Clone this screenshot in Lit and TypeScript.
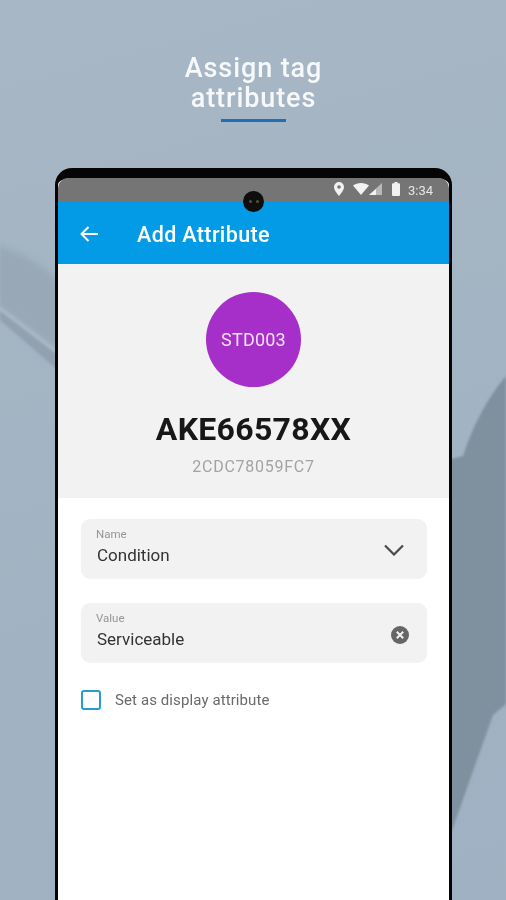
import { LitElement, html, css, svg } from "lit";
import { customElement } from "lit/decorators.js";

const FONT = css`Roboto, "Liberation Sans", sans-serif`;

@customElement("app-root")
export class AppRoot extends LitElement {
  static styles = css`
    :host {
      display: block;
      width: 506px;
      height: 900px;
      overflow: hidden;
      position: relative;
      background: linear-gradient(165deg, #a8b7c5 0%, #a3b4c3 40%, #9fb1c2 100%);
      font-family: ${FONT};
    }
    .bg {
      position: absolute;
      inset: 0;
      width: 506px;
      height: 900px;
      filter: blur(0.8px);
    }
    .page {
      position: relative;
      display: flex;
      flex-direction: column;
      align-items: center;
      padding: 53px 0 0 1px;
      filter: blur(0.35px);
    }
    h1 {
      margin: 0;
      font-size: 27px;
      line-height: 30px;
      font-weight: 500;
      letter-spacing: 0.9px;
      color: #f6f8fa;
      text-align: center;
    }
    .rule {
      width: 65px;
      height: 3px;
      margin-top: 6px;
      background: #1d6fb8;
    }
    .phone {
      margin-top: 46px;
      width: 397px;
      height: 760px;
      box-sizing: border-box;
      border: 3px solid #050505;
      border-top-width: 10px;
      border-radius: 17px 17px 0 0;
      background: #fff;
      position: relative;
    }
    .camera {
      position: absolute;
      left: 185px;
      top: 13px;
      width: 21px;
      height: 21px;
      border-radius: 50%;
      background: #0e0e0e;
      display: flex;
      align-items: center;
      justify-content: center;
      gap: 4px;
    }
    .camera i {
      width: 3px;
      height: 3px;
      border-radius: 50%;
      background: #5a5040;
    }
    .status {
      height: 24px;
      background: #757575;
      border-radius: 10px 10px 0 0;
      display: flex;
      align-items: center;
      justify-content: flex-end;
      padding-right: 16px;
      color: #e6e6e6;
      font-size: 13px;
    }
    .status svg { display: block; margin-top: -2px; }
    .status .pin { margin-right: 9px; }
    .status .signal { margin-right: 10px; }
    .status .battery { margin-right: 8px; }
    .appbar {
      height: 62px;
      background: #039be5;
      display: flex;
      align-items: center;
      color: #fff;
    }
    .back { margin-left: 22px; margin-top: 1px; display: block; }
    .appbar .title {
      margin-left: 39px;
      margin-top: 3px;
      font-size: 21.5px;
      font-weight: 500;
      letter-spacing: 0.38px;
    }
    .head {
      height: 234px;
      background: #f2f2f2;
      display: flex;
      flex-direction: column;
      align-items: center;
      padding-top: 28px;
      box-sizing: border-box;
    }
    .avatar {
      width: 95px;
      height: 95px;
      border-radius: 50%;
      background: #a62fc9;
      color: #f3e2f8;
      display: flex;
      align-items: center;
      justify-content: center;
      font-size: 18px;
      letter-spacing: 0.2px;
    }
    .tag {
      margin-top: 22px;
      font-size: 32px;
      line-height: 40px;
      font-weight: 700;
      letter-spacing: 0.3px;
      color: #171717;
    }
    .mac {
      margin-top: 8px;
      font-size: 16px;
      line-height: 20px;
      letter-spacing: 0.75px;
      color: #a3a3a3;
    }
    .form {
      padding: 21px 22px 0 23px;
      display: flex;
      flex-direction: column;
      gap: 25px;
    }
    .field {
      height: 59px;
      box-sizing: border-box;
      background: #f2f2f2;
      border-radius: 9px;
      box-shadow: 0 1px 1px rgba(0, 0, 0, 0.05);
      padding: 8px 16px 0 16px;
      display: flex;
      align-items: center;
      justify-content: space-between;
    }
    .texts { display: flex; flex-direction: column; align-self: flex-start; }
    .label {
      font-size: 11.5px;
      line-height: 13px;
      margin: 1px 0 0 -1px;
      color: #969696;
    }
    .value {
      margin-top: 3px;
      font-size: 17px;
      line-height: 22px;
      color: #333;
    }
    .chev { margin-right: 7px; margin-top: -5px; display: block; }
    .clear { margin-right: 2px; margin-top: -4px; display: block; }
    .check {
      display: flex;
      align-items: center;
      gap: 14px;
      margin-top: 3px;
    }
    .box {
      width: 20px;
      height: 20px;
      box-sizing: border-box;
      border: 2px solid #2a9ad4;
      border-radius: 3px;
      background: #fff;
    }
    .check span {
      font-size: 15px;
      color: #6a6a6a;
      letter-spacing: 0.1px;
    }
  `;

  render() {
    return html`
      <svg class="bg" viewBox="0 0 506 900" aria-hidden="true">
        ${svg`
          <defs>
            <filter id="soft" x="-20%" y="-20%" width="140%" height="140%"><feGaussianBlur stdDeviation="3"/></filter>
          </defs>
          <path d="M-10 244 C20 250 38 262 60 282 L60 352 L-10 300 Z" fill="#98a8b6" filter="url(#soft)"/>
          <path d="M0 306 L60 352 L60 357 L0 311 Z" fill="#aab7c2"/>
          <path d="M0 311 L60 357 L60 372 L0 320 Z" fill="#91a1b0"/>
          <path d="M440 462 L463 456 C475 420 490 395 506 376 L506 704 L493 715 L452 830 L440 830 Z" fill="#7f909f"/>
        `}
      </svg>
      <div class="page">
        <h1>Assign tag<br />attributes</h1>
        <div class="rule"></div>
        <div class="phone">
          <div class="status">
            <svg class="pin" width="10" height="14" viewBox="0 0 10 14"><path fill="#f2f2f2" fill-rule="evenodd" d="M5 0a5 5 0 0 0-5 5c0 3.500 5 9 5 9s5-5.500 5-9a5 5 0 0 0-5-5zm0 3.200a1.800 1.800 0 1 1 0 3.600 1.800 1.800 0 0 1 0-3.600z"/></svg>
            <svg class="wifi" width="16" height="12" viewBox="0 0 16 12"><path fill="#f2f2f2" d="M0 2.500C2 .9 5 0 8 0s6 .9 8 2.500L8 12z"/></svg>
            <svg class="signal" width="13" height="12" viewBox="0 0 13 12"><path fill="#b9b9b9" d="M13 0v12H0z"/><path fill="#f2f2f2" d="M7 6v6H0z"/></svg>
            <svg class="battery" width="8" height="14" viewBox="0 0 8 14"><path fill="#f2f2f2" d="M2.500 0h3v1.200H7a1 1 0 0 1 1 1V13a1 1 0 0 1-1 1H1a1 1 0 0 1-1-1V2.200a1 1 0 0 1 1-1h1.500z"/></svg>
            <span>3:34</span>
          </div>
          <div class="camera"><i></i><i></i></div>
          <div class="appbar">
            <svg class="back" width="18" height="16" viewBox="0 0 18 16"><path fill="none" stroke="#fff" stroke-width="2" d="M18 8H2M8.500 1 1.500 8l7 7"/></svg>
            <span class="title">Add Attribute</span>
          </div>
          <div class="head">
            <div class="avatar">STD003</div>
            <div class="tag">AKE66578XX</div>
            <div class="mac">2CDC78059FC7</div>
          </div>
          <div class="form">
            <div class="field">
              <div class="texts">
                <span class="label">Name</span>
                <span class="value">Condition</span>
              </div>
              <svg class="chev" width="20" height="12" viewBox="0 0 20 12"><path fill="none" stroke="#4a4a4a" stroke-width="2.200" d="M1 1.500 10 10.500 19 1.500"/></svg>
            </div>
            <div class="field">
              <div class="texts">
                <span class="label">Value</span>
                <span class="value">Serviceable</span>
              </div>
              <svg class="clear" width="18" height="18" viewBox="0 0 18 18"><circle cx="9" cy="9" r="9" fill="#666"/><path stroke="#f2f2f2" stroke-width="2" d="M5.800 5.800l6.400 6.400M12.200 5.800l-6.400 6.400"/></svg>
            </div>
            <div class="check">
              <div class="box"></div>
              <span>Set as display attribute</span>
            </div>
          </div>
        </div>
      </div>
    `;
  }
}
